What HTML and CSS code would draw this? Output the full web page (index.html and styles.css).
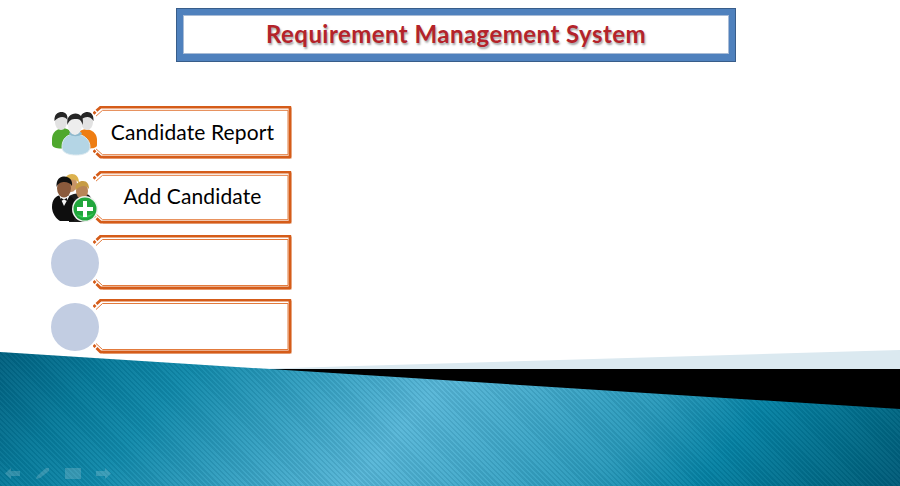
FILE: index.html
```html
<!DOCTYPE html>
<html lang="en">
<head>
<meta charset="utf-8">
<title>Requirement Management System</title>
<link rel="stylesheet" href="styles.css">
</head>
<body>
<svg class="defs" width="0" height="0" aria-hidden="true">
  <symbol id="frame" viewBox="0 0 199 55" preserveAspectRatio="none">
    <path class="frame-soft" d="M198.500 2V54.500H10"/>
    <path class="frame-thick" d="M0.500 8L2.500 6M3.500 5L7.500 1.200H197V53H7.500L3.500 49M2.500 48L0.500 46"/>
    <path class="frame-thin" d="M3 10.500L9.500 4.500H195"/>
    <path class="frame-thin" d="M3 44.500L9.500 50.500H195V4.500"/>
  </symbol>
</svg>

<header class="header">
  <div class="title-box">
    <h1 class="title">Requirement Management System</h1>
  </div>
</header>

<main class="menu">
  <div class="row">
    <svg class="icon" viewBox="0 -2 48 48" aria-hidden="true">
      <path fill="#4fa82e" d="M1 28c0-6 4-9 7-10 3-1 7-1 10 1l4 7-6 11C10 38 1 38 1 33z"/>
      <path fill="#ee7d12" d="M46 29c0-6-4-9-7-10-3-1-7-1-10 1l-4 7 6 10c6 1 15 1 15-3z"/>
      <ellipse fill="#e2e2e2" cx="10" cy="11" rx="6" ry="8"/>
      <ellipse fill="#e2e2e2" cx="36" cy="11" rx="6" ry="8"/>
      <path fill="#262626" d="M3.500 10C3 3 7 1 10.500 1S17 3 16.500 9C14 5 8 5 3.500 10zM29.500 9C29 3 33 1 36.500 1s6.500 3 6 9c-3-5-8-5-13-1z"/>
      <path fill="#b4d5e5" stroke="#dbe9f0" d="M11 36c0-8 5-13 13-13s15 5 15 13c0 6-7 8-14 8s-14-2-14-8z"/>
      <path fill="#8fb9cd" d="M18 23c3 3 10 3 13 0l-1-2H19z"/>
      <ellipse fill="#ededed" cx="24" cy="14" rx="7" ry="10"/>
      <path fill="#262626" d="M16.500 14C15 6 20 2.500 24.500 2.500s9 4 7 11.500c-1-5-3-6-6.500-6-4.500 0-7 1-8.500 6z"/>
    </svg>
    <div class="label">
      <svg class="frame" aria-hidden="true"><use href="#frame"/></svg>
      <span class="label-text">Candidate Report</span>
    </div>
  </div>

  <div class="row">
    <svg class="icon" viewBox="0 0 48 48" aria-hidden="true">
      <path fill="#1c1c1c" d="M18 22c4-3 14-4 20-1l6 8-10 19H18z"/>
      <ellipse fill="#c89468" cx="20" cy="10" rx="6" ry="8"/>
      <path fill="#dcb24e" d="M13.500 9C13 3 17 0 21 0s7 3 7 9c-3-4-9-5-14.500 0z"/>
      <ellipse fill="#b88558" cx="31" cy="17" rx="6" ry="8"/>
      <path fill="#c79c45" d="M24.500 16C24 9 28 7 32 7s6 3 6 8c-3-4-8-4-13.500 1z"/>
      <path fill="#0e0e0e" d="M1 33c0-7 3-11 9-12h6c6 1 9 6 9 12l-2 14H9C5 45 1 39 1 33z"/>
      <path fill="#f4f4f4" d="M8 21l5 11 6-11-6 2z"/>
      <path fill="#111" d="M10 24l3 1.500 3-1.500v3l-3-1.500-3 1.500z"/>
      <ellipse fill="#8a5a3c" cx="13" cy="14" rx="7" ry="9.500"/>
      <path fill="#111" d="M5.500 13C5 5 9 2.500 13.500 2.500S22 6 21 12c-2-3-4.500-4-7.500-4s-6.500 1-8 5z"/>
      <circle fill="#eef2ee" cx="34" cy="35" r="13"/>
      <circle fill="#21a63c" cx="34" cy="35" r="11.500"/>
      <path fill="#35cc55" d="M25 40a11.500 11.500 0 0 0 18-1c-5 3-12 4-18 1z"/>
      <path fill="#fff" d="M32 27h4v6h6v4h-6v6h-4v-6h-6v-4h6z"/>
    </svg>
    <div class="label">
      <svg class="frame" aria-hidden="true"><use href="#frame"/></svg>
      <span class="label-text label-text-raised">Add Candidate</span>
    </div>
  </div>

  <div class="row row-tall">
    <div class="placeholder"></div>
    <div class="label">
      <svg class="frame" aria-hidden="true"><use href="#frame"/></svg>
    </div>
  </div>

  <div class="row row-tall">
    <div class="placeholder"></div>
    <div class="label">
      <svg class="frame" aria-hidden="true"><use href="#frame"/></svg>
    </div>
  </div>
</main>

<footer class="footer">
  <div class="band"></div>
  <div class="black"></div>
  <div class="wave"></div>
  <nav class="slide-nav" aria-label="Slide controls">
    <svg class="nav-icon" viewBox="0 0 16 11" aria-hidden="true"><path d="M0 5.500l6-5.500v3h9v5H6v3z"/></svg>
    <svg class="nav-icon" viewBox="0 0 16 11" aria-hidden="true"><path d="M1 11l1-3 9-8 3 0 0 3-9 7z"/></svg>
    <svg class="nav-icon" viewBox="0 0 16 11" aria-hidden="true"><path d="M0 0h16v11H0z"/></svg>
    <svg class="nav-icon" viewBox="0 0 16 11" aria-hidden="true"><path d="M16 5.500l-6-5.500v3H1v5h9v3z"/></svg>
  </nav>
</footer>
</body>
</html>
```

FILE: styles.css
```css
* {
  box-sizing: border-box;
}

html,
body {
  margin: 0;
  padding: 0;
}

body {
  position: relative;
  width: 900px;
  height: 486px;
  overflow: hidden;
  background: #fff;
  font-family: "Lato", "Liberation Sans", sans-serif;
}

.defs {
  position: absolute;
}

.header {
  display: flex;
  justify-content: center;
  padding: 8px 0 0 12px;
}

.title-box {
  width: 560px;
  height: 54px;
  border: 1px solid #385d8a;
  background: #4f81bd;
  padding: 6px 6px 7px 6px;
}

.title {
  display: flex;
  align-items: center;
  justify-content: center;
  height: 100%;
  margin: 0;
  padding-bottom: 3px;
  background: #fff;
  border: 1px solid #a9bcd6;
  color: #b4232a;
  font-size: 24px;
  font-weight: 700;
  letter-spacing: 0.45px;
  text-shadow: 1px 2px 2px rgba(90, 90, 90, 0.55);
}

.menu {
  position: relative;
  z-index: 1;
  display: flex;
  flex-direction: column;
  padding: 44px 0 0 51px;
}

.row {
  display: flex;
  align-items: center;
  height: 53px;
  margin-bottom: 12px;
}

.row-tall {
  height: 55px;
  margin-top: -1px;
  margin-bottom: 10px;
}

.icon,
.placeholder {
  position: relative;
  z-index: 1;
  flex: none;
  width: 48px;
  height: 48px;
}

.placeholder {
  border-radius: 50%;
  background: #c2cde2;
}

.label {
  position: relative;
  display: flex;
  align-items: center;
  justify-content: center;
  width: 199px;
  height: 100%;
  margin-left: -6px;
  padding-bottom: 2px;
}

.label-text {
  font-size: 21px;
  letter-spacing: 0.12px;
  color: #000;
}

.label-text-raised {
  margin-bottom: 2px;
}

.frame {
  position: absolute;
  top: 0;
  left: 0;
  width: 100%;
  height: 100%;
}

.frame-thick,
.frame-thin,
.frame-soft {
  fill: none;
}

.frame-thick {
  stroke: #d55c19;
  stroke-width: 2.800;
  stroke-linejoin: round;
}

.frame-thin {
  stroke: #e27a3c;
  stroke-width: 1;
}

.frame-soft {
  stroke: #f3d4c2;
  stroke-width: 1;
}

.footer {
  position: absolute;
  left: 0;
  right: 0;
  bottom: 0;
  height: 136px;
}

.band,
.black,
.wave {
  position: absolute;
  left: 0;
  right: 0;
}

.band {
  top: 0;
  height: 19px;
  background: #dbe9f0;
  clip-path: polygon(100% 0, 100% 100%, 255px 100%);
}

.black {
  top: 19px;
  bottom: 0;
  background: #000;
}

.wave {
  top: 2px;
  bottom: 0;
  clip-path: polygon(0 0, 100% 57px, 100% 100%, 0 100%);
  background:
    repeating-linear-gradient(45deg, rgba(0, 50, 70, 0.09) 0 1.800px, rgba(255, 255, 255, 0.03) 1.800px 3.600px),
    linear-gradient(130deg, #00607f 0%, #067a9a 11%, #1089aa 20%, #58b7d8 46%, #2a9abb 69%, #0582a4 80%, #006682 94%, #005a78 100%);
}

.slide-nav {
  position: absolute;
  left: 5px;
  bottom: 7px;
  display: flex;
  gap: 14px;
}

.nav-icon {
  width: 16px;
  height: 11px;
  fill: rgba(220, 235, 240, 0.2);
}
```
